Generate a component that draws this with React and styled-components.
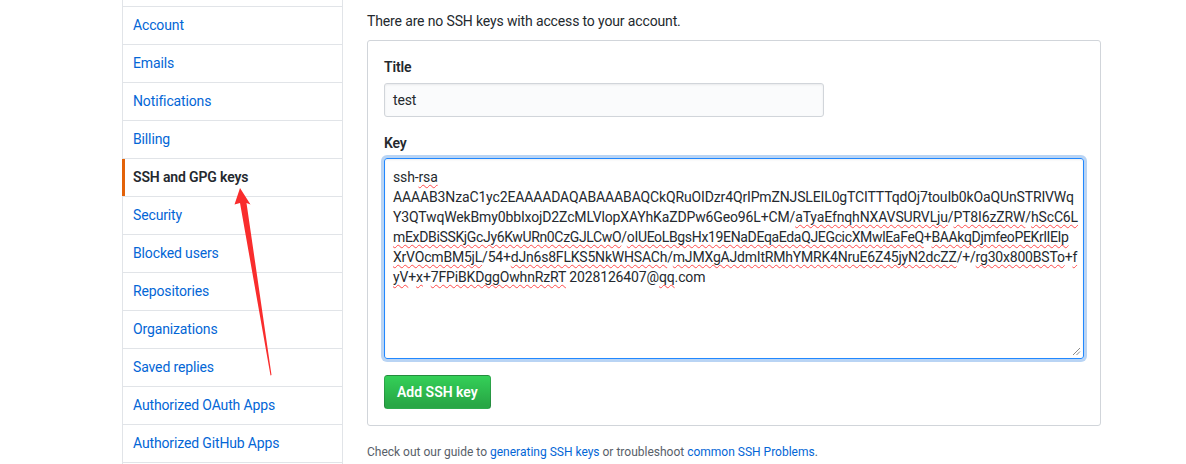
import React from "react";
import styled, { createGlobalStyle, css } from "styled-components";

const GlobalStyle = createGlobalStyle`
  html, body { margin: 0; padding: 0; background: #fff; overflow: hidden; }
  body {
    font-family: Roboto, "Liberation Sans", Arial, sans-serif;
    font-size: 14px;
    letter-spacing: -0.14px;
    color: #24292e;
  }
`;

const Page = styled.div`
  position: relative;
  display: flex;
  align-items: flex-start;
  gap: 24px;
  padding-left: 122px;
  width: 1186px;
  height: 464px;
  box-sizing: border-box;
  overflow: hidden;
`;

const Menu = styled.nav`
  width: 221px;
  flex: none;
  margin-top: -32px;
  border: 1px solid #e1e4e8;
  border-radius: 3px;
  box-sizing: border-box;
  background: #fff;
`;

const MenuItem = styled.a`
  position: relative;
  display: block;
  padding: 8px 10px;
  line-height: 21px;
  font-size: 14px;
  color: #0366d6;
  text-decoration: none;
  border-top: 1px solid #e1e4e8;
  &:first-child { border-top: 0; }
  ${(p) =>
    p.$selected &&
    css`
      color: #24292e;
      font-weight: 600;
      &::before {
        content: "";
        position: absolute;
        top: 0;
        bottom: 0;
        left: -1px;
        width: 3px;
        background: #e36209;
      }
    `}
`;

const Main = styled.main`
  width: 734px;
  flex: none;
  padding-top: 11px;
`;

const Lead = styled.p`
  margin: 0 0 8px;
  line-height: 21px;
`;

const Box = styled.form`
  border: 1px solid #d1d5da;
  border-radius: 3px;
  padding: 16px;
  background: #fff;
`;

const Group = styled.div`
  & + & { margin-top: 16px; }
`;

const Label = styled.label`
  display: block;
  font-weight: 600;
  line-height: 20px;
  margin-bottom: 6px;
  & + * { margin-top: 0; }
`;

const Input = styled.div`
  width: 440px;
  height: 34px;
  box-sizing: border-box;
  padding: 6px 8px;
  line-height: 20px;
  background: #fafbfc;
  border: 1px solid #d1d5da;
  border-radius: 3px;
  box-shadow: inset 0 1px 2px rgba(27, 31, 35, 0.075);
`;

const KeyArea = styled.div`
  position: relative;
  margin-top: -1px;
  height: 201px;
  box-sizing: border-box;
  padding: 8px;
  line-height: 20px;
  border: 1px solid #2188ff;
  border-radius: 3px;
  box-shadow: inset 0 1px 2px rgba(27, 31, 35, 0.075), 0 0 0 3px rgba(3, 102, 214, 0.28);
  white-space: nowrap;
  overflow: hidden;
`;

const KeyLine = styled.div`
  height: 20px;
  letter-spacing: ${(p) => p.$ls || "-0.14px"};
`;

const Miss = styled.span`
  text-decoration: underline wavy #ff4a4a;
  text-decoration-thickness: 1px;
  text-underline-offset: 2px;
  text-decoration-skip-ink: none;
`;

const Grip = styled.svg`
  position: absolute;
  right: 2px;
  bottom: 2px;
  width: 9px;
  height: 9px;
`;

const Button = styled.button`
  margin-top: 16px;
  display: inline-block;
  padding: 6px 12px;
  font-family: inherit;
  font-size: 14px;
  letter-spacing: 0;
  font-weight: 600;
  line-height: 20px;
  color: #fff;
  background-image: linear-gradient(-180deg, #34d058 0%, #28a745 90%);
  border: 1px solid rgba(27, 31, 35, 0.2);
  border-radius: 3.5px;
  cursor: pointer;
`;

const Help = styled.p`
  margin: 17px 0 0;
  font-size: 12px;
  letter-spacing: 0;
  line-height: 18px;
  color: #586069;
`;

const Link = styled.a`
  color: #0366d6;
  text-decoration: none;
`;

const Arrow = styled.svg`
  position: absolute;
  left: 230px;
  top: 185px;
  width: 50px;
  height: 195px;
  pointer-events: none;
`;

const items = [
  "Profile",
  "Account",
  "Emails",
  "Notifications",
  "Billing",
  "SSH and GPG keys",
  "Security",
  "Blocked users",
  "Repositories",
  "Organizations",
  "Saved replies",
  "Authorized OAuth Apps",
  "Authorized GitHub Apps",
  "Installed GitHub Apps",
];

export default function App() {
  return (
    <>
      <GlobalStyle />
      <Page>
        <Menu>
          {items.map((it) => (
            <MenuItem key={it} href="#" $selected={it === "SSH and GPG keys"}>
              {it}
            </MenuItem>
          ))}
        </Menu>
        <Main>
          <Lead>There are no SSH keys with access to your account.</Lead>
          <Box>
            <Group>
              <Label>Title</Label>
              <Input>test</Input>
            </Group>
            <Group>
              <Label>Key</Label>
              <KeyArea>
                <KeyLine>
                  ssh-<Miss>rsa</Miss>
                </KeyLine>
                <KeyLine>AAAAB3NzaC1yc2EAAAADAQABAAABAQCkQRuOIDzr4QrIPmZNJSLEIL0gTCITTTqdOj7touIb0kOaQUnSTRIVWq</KeyLine>
                <KeyLine>
                  Y3QTwqWekBmy0bbIxojD2ZcMLVlopXAYhKaZDPw6Geo96L+CM/<Miss>aTyaEfnqhNXAVSURVLju</Miss>/
                  <Miss>PT8I6zZRW</Miss>/<Miss>hScC6L</Miss>
                </KeyLine>
                <KeyLine $ls="-0.34px">
                  <Miss>mExDBiSSKjGcJy6KwURn0CzGJLCwO</Miss>/<Miss>oIUEoLBgsHx19ENaDEqaEdaQJEGcicXMwlEaFeQ</Miss>+
                  <Miss>BAAkqDjmfeoPEKrlIEIp</Miss>
                </KeyLine>
                <KeyLine $ls="-0.2px">
                  <Miss>XrVOcmBM5jL</Miss>/54+<Miss>dJn6s8FLKS5NkWHSACh</Miss>/
                  <Miss>mJMXgAJdmItRMhYMRK4NruE6Z45jyN2dcZZ</Miss>/+/<Miss>rg30x800BSTo</Miss>+<Miss>f</Miss>
                </KeyLine>
                <KeyLine>
                  <Miss>yV</Miss>+<Miss>x</Miss>+<Miss>7FPiBKDggOwhnRzRT</Miss> 2028126407@<Miss>qq</Miss>.com
                </KeyLine>
                <Grip viewBox="0 0 9 9">
                  <path d="M1 8 L8 1 M4.5 8 L8 4.5" stroke="#8a8a8a" strokeWidth="1" />
                </Grip>
              </KeyArea>
            </Group>
            <Button type="button">Add SSH key</Button>
          </Box>
          <Help>
            Check out our guide to <Link href="#">generating SSH keys</Link> or troubleshoot{" "}
            <Link href="#">common SSH Problems</Link>.
          </Help>
        </Main>
        <Arrow viewBox="0 0 50 195">
          <polygon
            points="10,3 20.5,19.5 16.5,18 41.5,190 40.5,190.5 10,18 4.5,19.5"
            fill="#f92d2d"
          />
        </Arrow>
      </Page>
    </>
  );
}
